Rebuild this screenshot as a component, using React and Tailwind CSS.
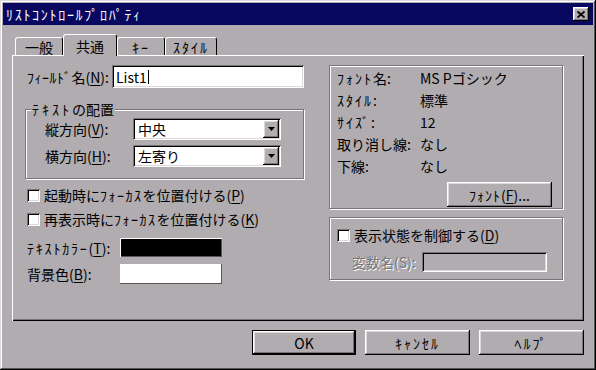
import React from "react";

const raised =
  "shadow-[inset_-1px_-1px_#000,inset_1px_1px_#fff,inset_-2px_-2px_#787478,inset_2px_2px_#dcd8dc]";
const sunken =
  "shadow-[inset_1px_1px_#787478,inset_-1px_-1px_#fff,inset_2px_2px_#000,inset_-2px_-2px_#dcd8dc]";
const etched =
  "border border-[#787478] shadow-[inset_1px_1px_#fff,1px_1px_#fff]";

function U({ c }) {
  return <span className="underline underline-offset-[2px] decoration-1">{c}</span>;
}

function Check() {
  return <span className={"w-[13px] h-[13px] bg-white shrink-0 " + sunken} />;
}

function Select({ value }) {
  return (
    <div className={"w-[148px] h-[22px] bg-white flex items-center p-[2px] " + sunken}>
      <span className="flex-1 pl-[3px]">{value}</span>
      <span className={"w-[16px] h-full bg-[#b0acb0] flex items-center justify-center " + raised}>
        <svg width="7" height="4" viewBox="0 0 7 4">
          <path d="M0 0h7L3.5 4z" fill="#000" />
        </svg>
      </span>
    </div>
  );
}

function Btn({ children, w, def }) {
  return (
    <div className={"h-[25px] " + w + (def ? " border border-black" : "")}>
      <div className={"w-full h-full flex items-center justify-center " + raised}>{children}</div>
    </div>
  );
}

export default function App() {
  return (
    <div
      className={
        "w-[596px] h-[370px] bg-[#b0acb0] p-[3px] flex flex-col overflow-hidden text-black text-[14px] leading-none font-['Noto_Sans_CJK_JP',sans-serif] shadow-[inset_-1px_-1px_#000,inset_1px_1px_#dcd8dc,inset_-2px_-2px_#585458,inset_2px_2px_#fff]"
      }
    >
      {/* title bar */}
      <div className="h-[22px] bg-[#080860] flex items-center justify-between pl-[3px] pr-[4px] shrink-0">
        <span className="text-white tracking-[1.7px]">ﾘｽﾄｺﾝﾄﾛｰﾙﾌﾟﾛﾊﾟﾃｨ</span>
        <div className={"w-[16px] h-[14px] bg-[#b0acb0] flex items-center justify-center " + raised}>
          <svg width="8" height="7" viewBox="0 0 8 7">
            <path d="M0.5 0.5L7.5 6.5M7.5 0.5L0.5 6.5" stroke="#000" strokeWidth="1.8" />
          </svg>
        </div>
      </div>

      <div className="pl-[9px] pr-[9px] pt-[8px] flex flex-col">
        {/* tabs */}
        <div className="flex items-end h-[22px] pl-[3px] relative z-10">
          <div className="w-[48px] h-[18px] border-t border-l border-white border-r border-r-[#000] rounded-t-[3px] flex items-center justify-center">
            一般
          </div>
          <div className="w-[54px] h-[22px] -mb-[1px] bg-[#b0acb0] border-t border-l border-white border-r border-r-[#000] rounded-t-[3px] flex items-start pt-[4px] justify-center">
            共通
          </div>
          <div className="w-[48px] h-[18px] border-t border-l border-white border-r border-r-[#000] rounded-t-[3px] flex items-center justify-center tracking-[2px]">
            ｷｰ
          </div>
          <div className="w-[52px] h-[18px] border-t border-l border-white border-r border-r-[#000] rounded-t-[3px] flex items-center justify-center tracking-[2px]">
            ｽﾀｲﾙ
          </div>
        </div>

        {/* panel */}
        <div className="h-[266px] flex pl-[13px] pt-[10px] shadow-[inset_1px_1px_#fff,inset_-1px_-1px_#000,inset_-2px_-2px_#787478]">
          {/* left column */}
          <div className="w-[279px] flex flex-col">
            <div className="h-[23px] flex items-center">
              <span className="w-[87px] pl-[2px]">
                <span className="tracking-[0.5px]">ﾌｨｰﾙﾄﾞ</span>名(<U c="N" />):
              </span>
              <div className={"w-[192px] h-[23px] bg-white flex items-center pl-[4px] " + sunken}>
                <span>List1</span>
                <span className="w-[1px] h-[14px] bg-black ml-[1px]" />
              </div>
            </div>

            <div className={"relative mt-[21px] h-[70px] pt-[8px] pl-[19px] flex flex-col gap-[5px] " + etched}>
              <span className="absolute -top-[8px] left-[5px] bg-[#b0acb0] px-[1px]">
                <span className="tracking-[3px]">ﾃｷｽﾄ</span>の配置
              </span>
              <div className="h-[22px] flex items-center">
                <span className="w-[88px]">
                  縦方向(<U c="V" />):
                </span>
                <Select value="中央" />
              </div>
              <div className="h-[22px] flex items-center">
                <span className="w-[88px]">
                  横方向(<U c="H" />):
                </span>
                <Select value="左寄り" />
              </div>
            </div>

            <div className="mt-[6px] flex flex-col gap-[4px] pl-[2px]">
              <div className="h-[20px] flex items-center gap-[4px]">
                <Check />
                <span>
                  起動時に<span className="tracking-[1.5px]">ﾌｫｰｶｽ</span>を位置付ける(<U c="P" />)
                </span>
              </div>
              <div className="h-[20px] flex items-center gap-[4px]">
                <Check />
                <span>
                  再表示時に<span className="tracking-[1.5px]">ﾌｫｰｶｽ</span>を位置付ける(<U c="K" />)
                </span>
              </div>
            </div>

            <div className="mt-[9px] flex flex-col gap-[7px] pl-[2px]">
              <div className="h-[19px] flex items-center">
                <span className="w-[93px]">
                  <span className="tracking-[1.8px]">ﾃｷｽﾄｶﾗｰ</span>(<U c="T" />):
                </span>
                <div className="w-[102px] h-[19px] bg-black shadow-[inset_1px_1px_#fff,inset_-1px_-1px_#585458]" />
              </div>
              <div className="h-[20px] flex items-center">
                <span className="w-[93px]">
                  背景色(<U c="B" />):
                </span>
                <div className="w-[102px] h-[20px] bg-white shadow-[inset_-1px_-1px_#585458]" />
              </div>
            </div>
          </div>

          {/* right column */}
          <div className="ml-[25px] w-[234px] flex flex-col">
            <div className={"h-[144px] pt-[1px] pl-[7px] pr-[10px] flex flex-col " + etched}>
              {[
                ["ﾌｫﾝﾄ", "名:"],
                ["ｽﾀｲﾙ", ":"],
                ["ｻｲｽﾞ", ":"],
              ].map(([k, s], i) => (
                <div key={k} className="h-[22px] flex items-center">
                  <span className="w-[83px]">
                    <span className="tracking-[2px]">{k}</span>
                    {s}
                  </span>
                  <span>{["MS Pゴシック", "標準", "12"][i]}</span>
                </div>
              ))}
              <div className="h-[22px] flex items-center">
                <span className="w-[83px]">取り消し線:</span>
                <span>なし</span>
              </div>
              <div className="h-[22px] flex items-center">
                <span className="w-[83px]">下線:</span>
                <span>なし</span>
              </div>
              <div className="mt-[5px] flex justify-end">
                <Btn w="w-[105px]">
                  <span className="tracking-[1px]">ﾌｫﾝﾄ</span>(<U c="F" />)...
                </Btn>
              </div>
            </div>

            <div className={"mt-[8px] h-[63px] pl-[7px] pt-[9px] flex flex-col " + etched}>
              <div className="h-[16px] flex items-center gap-[4px]">
                <Check />
                <span>
                  表示状態を制御する(<U c="D" />)
                </span>
              </div>
              <div className="mt-[9px] h-[20px] flex items-center">
                <span className="w-[85px] pl-[15px] text-[#787478] [text-shadow:1px_1px_0_#fff]">
                  変数名(S):
                </span>
                <div className={"w-[125px] h-[20px] bg-[#b0acb0] " + sunken} />
              </div>
            </div>
          </div>
        </div>

        {/* buttons */}
        <div className="mt-[9px] flex justify-end gap-[9px]">
          <Btn w="w-[104px]" def>
            OK
          </Btn>
          <Btn w="w-[105px]">
            <span className="tracking-[2px]">ｷｬﾝｾﾙ</span>
          </Btn>
          <Btn w="w-[105px]">
            <span className="tracking-[2px]">ﾍﾙﾌﾟ</span>
          </Btn>
        </div>
      </div>
    </div>
  );
}
